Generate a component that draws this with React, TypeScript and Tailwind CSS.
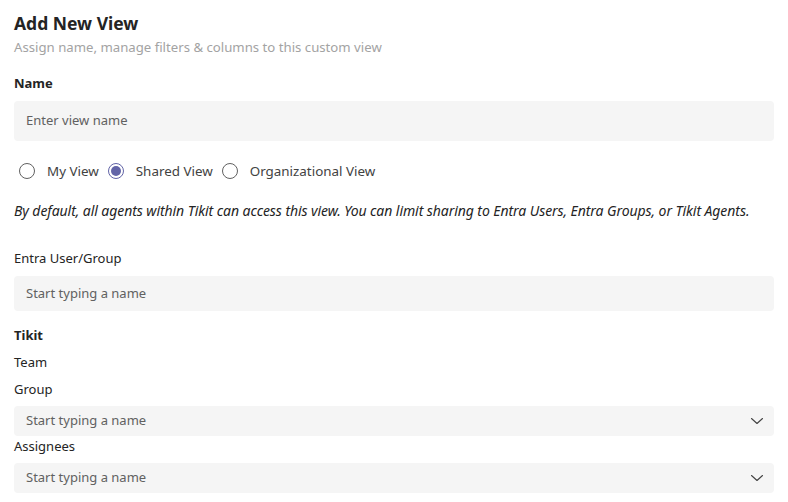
import React from "react";

const font = { fontFamily: '"Noto Sans", "Open Sans", sans-serif' };

function Chevron() {
  return (
    <svg width="16" height="16" viewBox="0 0 16 16" fill="none" className="text-[#424242]">
      <path d="M2.5 5.5l5.5 5 5.5-5" stroke="currentColor" strokeWidth="1.1" strokeLinecap="round" strokeLinejoin="round" />
    </svg>
  );
}

function Radio({ label, checked }: { label: string; checked?: boolean }) {
  return (
    <label className="flex items-center gap-[12px] pl-[5px] pr-[2px]">
      <span
        className={
          "flex h-[16px] w-[16px] items-center justify-center rounded-full border " +
          (checked ? "border-[#6264a7]" : "border-[#616161]")
        }
      >
        {checked && <span className="h-[10px] w-[10px] rounded-full bg-[#6264a7]" />}
      </span>
      <span className="text-[13.4px] leading-[20px] text-[#424242]">{label}</span>
    </label>
  );
}

function TextBox({ placeholder, h, select }: { placeholder: string; h: string; select?: boolean }) {
  return (
    <div className={"flex items-center justify-between rounded-[4px] bg-[#f5f5f5] pl-[12px] pr-[9px] " + h}>
      <span className="text-[13px] text-[#616161]">{placeholder}</span>
      {select && <Chevron />}
    </div>
  );
}

export default function App() {
  return (
    <div className="h-[502px] w-[788px] overflow-hidden bg-white px-[14px] pt-[10px] text-[#242424]" style={font}>
      <h1 className="text-[17.5px] font-bold leading-[26px]">Add New View</h1>
      <p className="mt-[1px] text-[13.2px] leading-[20px] text-[#a3a3a3]">
        Assign name, manage filters &amp; columns to this custom view
      </p>

      <div className="mt-[16px] text-[13px] font-bold leading-[20px]">Name</div>
      <div className="mt-[8px]">
        <TextBox placeholder="Enter view name" h="h-[40px]" />
      </div>

      <div className="mt-[20px] flex h-[20px] items-center gap-[2px]">
        <Radio label="My View" />
        <Radio label="Shared View" checked />
        <Radio label="Organizational View" />
      </div>

      <p className="mt-[20px] text-[14px] italic leading-[20px] tracking-[-0.07px] text-[#242424]">
        By default, all agents within Tikit can access this view. You can limit sharing to Entra Users, Entra Groups, or Tikit Agents.
      </p>

      <div className="mt-[27px] text-[13px] leading-[20px]">Entra User/Group</div>
      <div className="mt-[8px]">
        <TextBox placeholder="Start typing a name" h="h-[35px]" />
      </div>

      <div className="mt-[14px] text-[13px] font-bold leading-[20px]">Tikit</div>
      <div className="mt-[7px] text-[13px] leading-[20px]">Team</div>
      <div className="mt-[7px] text-[13px] leading-[20px]">Group</div>
      <div className="mt-[7px]">
        <TextBox placeholder="Start typing a name" h="h-[30px]" select />
      </div>
      <div className="text-[13px] leading-[20px]">Assignees</div>
      <div className="mt-[7px]">
        <TextBox placeholder="Start typing a name" h="h-[30px]" select />
      </div>
    </div>
  );
}
